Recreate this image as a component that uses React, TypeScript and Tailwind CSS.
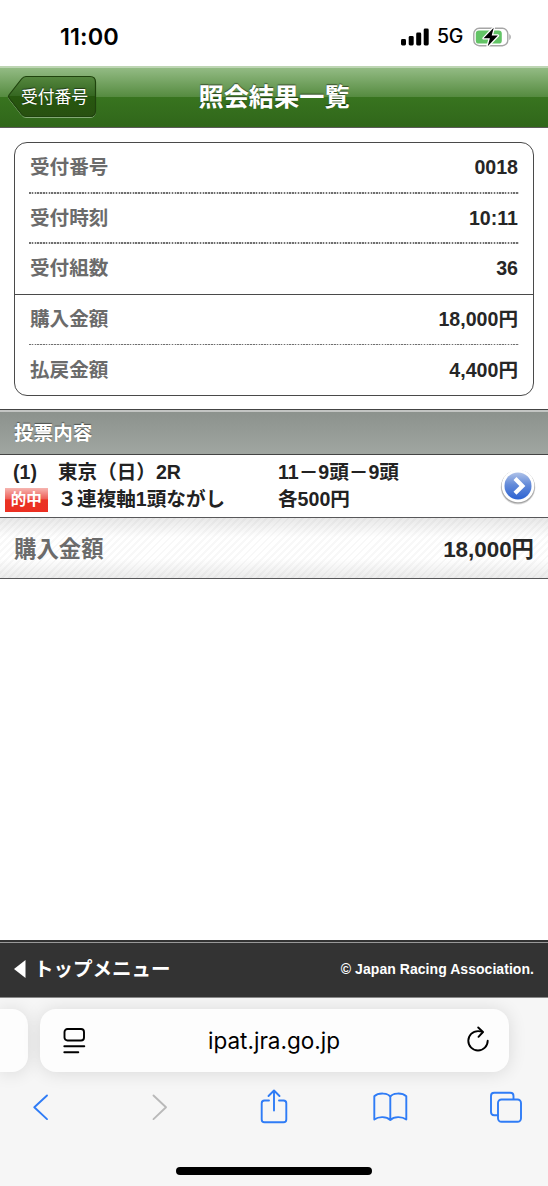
import type { ReactNode } from "react";

const receiptRows = [
  { label: "受付番号", value: "0018", line: "dotted" },
  { label: "受付時刻", value: "10:11", line: "dotted" },
  { label: "受付組数", value: "36", line: "solid" },
  { label: "購入金額", value: "18,000円", line: "dotted" },
  { label: "払戻金額", value: "4,400円", line: "none" },
];

const StatusBar = () => {
  return (
    <div className="flex h-[66px] shrink-0 items-center justify-between bg-white pt-[7px] pr-[36px] pl-[60px] text-black">
      <span className="font-['Inter',sans-serif] text-[23.5px] leading-none font-semibold tracking-[0.1px]">
        11:00
      </span>
      <div className="flex items-center">
        <svg width="28" height="18" viewBox="0 0 28 18" className="mr-[8px]">
          <rect x="0" y="11" width="5" height="6.5" rx="1.4" />
          <rect x="7.7" y="8" width="5" height="9.5" rx="1.4" />
          <rect x="15.2" y="4.5" width="5" height="13" rx="1.4" />
          <rect x="22.7" y="0.5" width="5" height="17" rx="1.4" />
        </svg>
        <span className="mr-[10px] w-[26px] font-['Inter',sans-serif] text-[19.5px] leading-none font-medium tracking-[-0.3px]">
          5G
        </span>
        <svg width="39" height="20" viewBox="0 0 39 20">
          <rect x="0.8" y="1.3" width="34" height="17.4" rx="5.4" fill="none" stroke="#a6a6a6" strokeWidth="1.4" />
          <rect x="2.8" y="3.4" width="26" height="13.2" rx="3.2" fill="#63c466" />
          <path d="M36.3 7v6c2-.7 2-5.3 0-6z" fill="#a6a6a6" />
          <path
            d="M20.7.8 10.6 11.3h6.3L14.7 19.2 24.9 8.6h-6.2z"
            fill="#000"
            stroke="#fff"
            strokeWidth="2.6"
            strokeLinejoin="round"
            paintOrder="stroke"
          />
        </svg>
      </div>
    </div>
  );
};

const Header = () => {
  return (
    <header className="relative flex h-[62px] shrink-0 items-center justify-center border-t-2 border-b-[1.5px] border-t-[#bdd5b3] border-b-[#5b5b59] bg-[linear-gradient(to_bottom,#93bb84_0%,#548a3e_50%,#38741f_50%,#30661a_100%)]">
      <button className="absolute top-[7px] left-[7px] flex h-[45px] w-[91px] items-center pl-[14px]">
        <svg width="91" height="45" viewBox="0 0 91 45" className="absolute top-0 left-0">
          <defs>
            <linearGradient id="back" x1="0" y1="0" x2="0" y2="1">
              <stop offset="0" stopColor="#55873f" />
              <stop offset="0.5" stopColor="#346620" />
              <stop offset="0.5" stopColor="#27580f" />
              <stop offset="1" stopColor="#285010" />
            </linearGradient>
          </defs>
          <path
            d="M19 2.5H83Q88.500 2.500 88.500 8V37Q88.500 42.500 83 42.500H19Q16.500 42.500 14.500 40L2 24Q.8 22.200 2 20.500L14.500 5Q16.500 2.500 19 2.500Z"
            fill="none"
            stroke="#83a974"
            strokeWidth="1"
          />
          <path
            d="M19 1.500H83Q88.500 1.500 88.500 7V36Q88.500 41.500 83 41.500H19Q16.500 41.500 14.500 39L2 23Q.8 21.500 2 20L14.500 4Q16.500 1.500 19 1.500Z"
            fill="url(#back)"
            stroke="#1f430d"
            strokeWidth="1.2"
          />
        </svg>
        <span className="relative mt-px text-[16.8px] leading-none font-normal text-white [text-shadow:0_-1px_1px_rgba(0,0,0,0.5)]">
          受付番号
        </span>
      </button>
      <h1 className="pt-px text-[25.2px] leading-none font-bold text-white [text-shadow:0_-1px_1px_rgba(0,0,0,0.5)]">
        照会結果一覧
      </h1>
    </header>
  );
};

const ReceiptCard = () => {
  return (
    <section className="mx-[14px] mt-[14px] flex h-[254px] shrink-0 flex-col rounded-[13px] border-[1.5px] border-[#4a4a4a]">
      {receiptRows.map((row) => (
        <div
          key={row.label}
          className={`flex flex-1 flex-col ${row.line === "solid" ? "border-b border-[#4a4a4a]" : ""}`}
        >
          <dl className="flex flex-1 items-center justify-between px-[15px] pt-[1.5px] text-[19.6px] leading-none font-bold">
            <dt className="text-[#6b6b6b]">{row.label}</dt>
            <dd className="text-[#262626]">{row.value}</dd>
          </dl>
          {row.line === "dotted" && (
            <div className="relative top-[0.5px] mx-[14px] h-[1.5px] bg-[repeating-linear-gradient(to_right,#707070_0_1.5px,#d8d8d8_1.5px_2.8px)]" />
          )}
        </div>
      ))}
    </section>
  );
};

const VoteRow = () => {
  return (
    <div className="flex h-[63px] shrink-0 items-center border-b-[1.5px] border-[#58585a] bg-white pr-[11px] pl-[5px] text-[19.6px] leading-[27px] font-bold text-[#222]">
      <div className="w-[273px]">
        <div className="flex">
          <span className="w-[53px] pl-[8px]">(1)</span>
          <span>東京（日）2R</span>
        </div>
        <div className="flex items-center">
          <span className="mr-[10px] flex h-[24px] w-[42.5px] items-center justify-center bg-[linear-gradient(to_bottom,#f6b5b0_0%,#ee6059_44%,#ea3323_50%,#ec2f22_100%)] text-[15.5px] text-white">
            的中
          </span>
          <span>３連複軸1頭ながし</span>
        </div>
      </div>
      <div className="flex-1">
        <div>11－9頭－9頭</div>
        <div>各500円</div>
      </div>
      <svg width="38" height="38" viewBox="0 0 38 38">
        <defs>
          <linearGradient id="disc" x1="0" y1="0" x2="0" y2="1">
            <stop offset="0" stopColor="#afc2e8" />
            <stop offset="0.45" stopColor="#648bd9" />
            <stop offset="1" stopColor="#2d63d2" />
          </linearGradient>
        </defs>
        <circle cx="19" cy="20.3" r="17.3" fill="#b5b5b5" opacity="0.5" />
        <circle cx="19" cy="19.8" r="16.8" fill="#a3a3a3" />
        <circle cx="19" cy="18.9" r="16.3" fill="#fff" />
        <circle cx="19" cy="18.9" r="13.5" fill="url(#disc)" />
        <path d="m16 11.5 7.4 7.4-7.4 7.4" fill="none" stroke="#fff" strokeWidth="4.2" />
      </svg>
    </div>
  );
};

const VoteSection = () => {
  return (
    <section className="mt-[13px] flex flex-col">
      <h2 className="flex h-[46px] shrink-0 items-center border-t border-b-[1.5px] border-[#444] bg-[linear-gradient(to_bottom,#8b918c,#a0a6a1)] px-[14px] pt-[4px] text-[19.6px] leading-none font-bold text-white shadow-[inset_0_2px_0_#c3c5c3] [text-shadow:0_-1px_1px_rgba(0,0,0,0.45)]">
        投票内容
      </h2>
      <VoteRow />
      <div className="flex h-[61px] shrink-0 items-center justify-between border-b-[1.5px] border-[#58585a] bg-[linear-gradient(to_bottom,rgba(0,0,0,0.09),transparent_32%,transparent_68%,rgba(0,0,0,0.08)),repeating-linear-gradient(135deg,#fff_0_3px,#f8f8f8_3px_5px)] px-[14px] pt-[4px] text-[22.4px] leading-none font-bold">
        <span className="text-[#6b6b6b]">購入金額</span>
        <span className="text-[#262626]">18,000円</span>
      </div>
    </section>
  );
};

const PageFooter = () => {
  return (
    <footer className="mt-auto flex h-[58px] shrink-0 items-center justify-between border-t-2 border-b border-t-[#333] border-b-[#888] bg-[#333] px-[14px] font-bold text-white shadow-[inset_0_1px_0_#999]">
      <div className="flex items-center gap-[8px] text-[19.5px] leading-none">
        <svg width="12" height="18" viewBox="0 0 12 18" fill="#fff" className="-mt-px">
          <path d="M0 9 11.5 0v18z" />
        </svg>
        <span>トップメニュー</span>
      </div>
      <small className="pb-[2px] text-[14px] leading-none tracking-[0.05px]">© Japan Racing Association.</small>
    </footer>
  );
};

const ToolIcon = ({ children, color = "#2f7cf6" }: { children: ReactNode; color?: string }) => (
  <svg
    width="36"
    height="36"
    viewBox="0 0 36 36"
    fill="none"
    stroke={color}
    strokeWidth="1.9"
    strokeLinecap="round"
    strokeLinejoin="round"
  >
    {children}
  </svg>
);

const BrowserBar = () => {
  return (
    <nav className="flex h-[188px] shrink-0 flex-col overflow-hidden bg-[#f6f6f6] pt-[11px]">
      <div className="flex h-[63px] shrink-0 gap-[11.5px]">
        <div className="w-[28px] rounded-r-[16px] bg-[#fdfdfd] shadow-[0_1px_18px_rgba(0,0,0,0.12)]" />
        <div className="flex w-[469px] items-center justify-between rounded-[16px] bg-[#fdfdfd] pr-[19px] pl-[23px] shadow-[0_1px_18px_rgba(0,0,0,0.12)]">
          <svg width="23" height="28" viewBox="0 0 23 28" fill="none" stroke="#000" strokeWidth="1.9" strokeLinecap="round">
            <rect x="1.5" y="2" width="19.5" height="11.5" rx="3" />
            <path d="M1.3 19.3h20M1.3 25.3h14" />
          </svg>
          <span className="pt-[2px] pr-[3px] font-['Inter',sans-serif] text-[22.5px] leading-none text-black">
            ipat.jra.go.jp
          </span>
          <svg
            width="24"
            height="28"
            viewBox="0 0 24 28"
            fill="none"
            stroke="#000"
            strokeWidth="1.9"
            strokeLinecap="round"
            strokeLinejoin="round"
            className="-mt-[2px]"
          >
            <path d="M21.7 14.8a9.7 9.7 0 1 1-9.7-9.7c1.5 0 3.2.3 4.6.9" />
            <path d="m12.2 1.5 4.800 4.500-4.500 4.800" />
          </svg>
        </div>
      </div>
      <div className="mt-[17px] flex items-center justify-between pr-[24px] pl-[22.5px]">
        <ToolIcon>
          <path d="M24 6.5 11.3 18.300 24 30.100" />
        </ToolIcon>
        <ToolIcon color="#b9b9b9">
          <path d="m14.500 6.5 12.500 11.800-12.500 11.800" />
        </ToolIcon>
        <ToolIcon>
          <path d="M14 11.5H9.500q-2.800 0-2.800 2.800v16.200q0 2.800 2.800 2.800h19q2.800 0 2.800-2.800V14.300q0-2.800-2.800-2.800H24M19 21.500V2M13.500 7 19 1.500 24.500 7" />
        </ToolIcon>
        <ToolIcon>
          <path d="M18.300 8C16.500 3.800 6.500 3.300 2.300 7.300V30.500C6.500 27.300 14.500 27.300 18.300 31 22 27.300 30 27.300 34.300 30.500V7.300C30 3.300 20 3.800 18.300 8ZM18.300 8v23" />
        </ToolIcon>
        <ToolIcon>
          <rect x="10" y="10.5" width="23" height="22.3" rx="3.5" />
          <path d="M25.500 10V7q0-3.200-3.200-3.200H6.200Q3 3.800 3 7v16q0 3.200 3.200 3.200H9.500" />
        </ToolIcon>
      </div>
      <div className="mx-auto mt-[42px] h-[7.5px] w-[196px] rounded-full bg-black" />
    </nav>
  );
};

export default function App() {
  return (
    <div className="flex h-[1186px] w-[548px] flex-col overflow-hidden bg-white font-['Liberation_Sans','Noto_Sans_CJK_JP',sans-serif]">
      <StatusBar />
      <Header />
      <ReceiptCard />
      <VoteSection />
      <PageFooter />
      <BrowserBar />
    </div>
  );
}
